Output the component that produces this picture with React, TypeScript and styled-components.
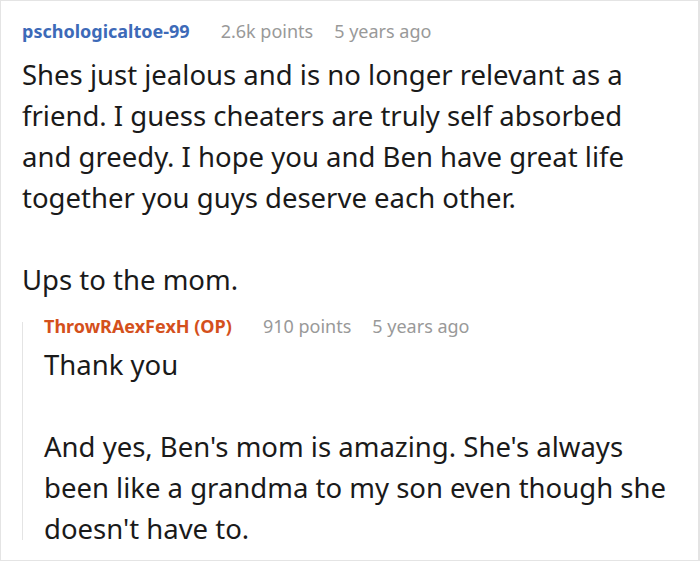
import styled, { createGlobalStyle } from "styled-components";

const GlobalStyle = createGlobalStyle`
  html, body {
    margin: 0;
    padding: 0;
    background: #ffffff;
  }
  body {
    font-family: "Noto Sans", "Open Sans", sans-serif;
  }
`;

const Card = styled.div`
  box-sizing: border-box;
  width: 700px;
  height: 561px;
  border: 1px solid #e4e4e4;
  border-right-width: 2px;
  padding: 18px 27px 0 21px;
  overflow: hidden;
`;

const Comment = styled.div``;

const Meta = styled.div`
  display: flex;
  align-items: baseline;
  font-size: 18px;
  line-height: 24px;
  white-space: nowrap;
`;

const Author = styled.span<{ $op?: boolean }>`
  font-weight: 700;
  color: ${(props) => (props.$op ? "#d4501c" : "#3d6ab8")};
  margin-right: 31px;
`;

const Points = styled.span`
  color: #999999;
  margin-right: 21px;
`;

const Age = styled.span`
  color: #999999;
`;

const Body = styled.div<{ $gap: number }>`
  font-size: 27.5px;
  line-height: 41px;
  color: #1a1a1a;
  margin-top: ${(props) => props.$gap}px;
  p {
    margin: 0 0 41px;
  }
  p:last-child {
    margin-bottom: 0;
  }
`;

const Replies = styled.div`
  position: relative;
  margin-top: 14px;
  padding-left: 22px;
  // thread line, a bit shorter than the reply itself
  &::before {
    content: "";
    position: absolute;
    left: 0;
    top: 8px;
    bottom: 9px;
    width: 1px;
    background: #e4e4e4;
  }
`;

interface IComment {
  author: string;
  op?: boolean;
  points: string;
  age: string;
  paragraphs: string[];
}

const parent: IComment = {
  author: "pschologicaltoe-99",
  points: "2.6k points",
  age: "5 years ago",
  paragraphs: [
    "Shes just jealous and is no longer relevant as a friend. I guess cheaters are truly self absorbed and greedy. I hope you and Ben have great life together you guys deserve each other.",
    "Ups to the mom.",
  ],
};

const reply: IComment = {
  author: "ThrowRAexFexH (OP)",
  op: true,
  points: "910 points",
  age: "5 years ago",
  paragraphs: [
    "Thank you",
    "And yes, Ben's mom is amazing. She's always been like a grandma to my son even though she doesn't have to.",
  ],
};

function CommentHead({ c }: { c: IComment }) {
  return (
    <Meta>
      <Author $op={c.op}>{c.author}</Author>
      <Points>{c.points}</Points>
      <Age>{c.age}</Age>
    </Meta>
  );
}

function App() {
  return (
    <>
      <GlobalStyle />
      <Card>
        <Comment>
          <CommentHead c={parent} />
          <Body $gap={11}>
            {parent.paragraphs.map((p) => (
              <p key={p}>{p}</p>
            ))}
          </Body>
          <Replies>
            <CommentHead c={reply} />
            <Body $gap={6}>
              {reply.paragraphs.map((p) => (
                <p key={p}>{p}</p>
              ))}
            </Body>
          </Replies>
        </Comment>
      </Card>
    </>
  );
}

export default App;
